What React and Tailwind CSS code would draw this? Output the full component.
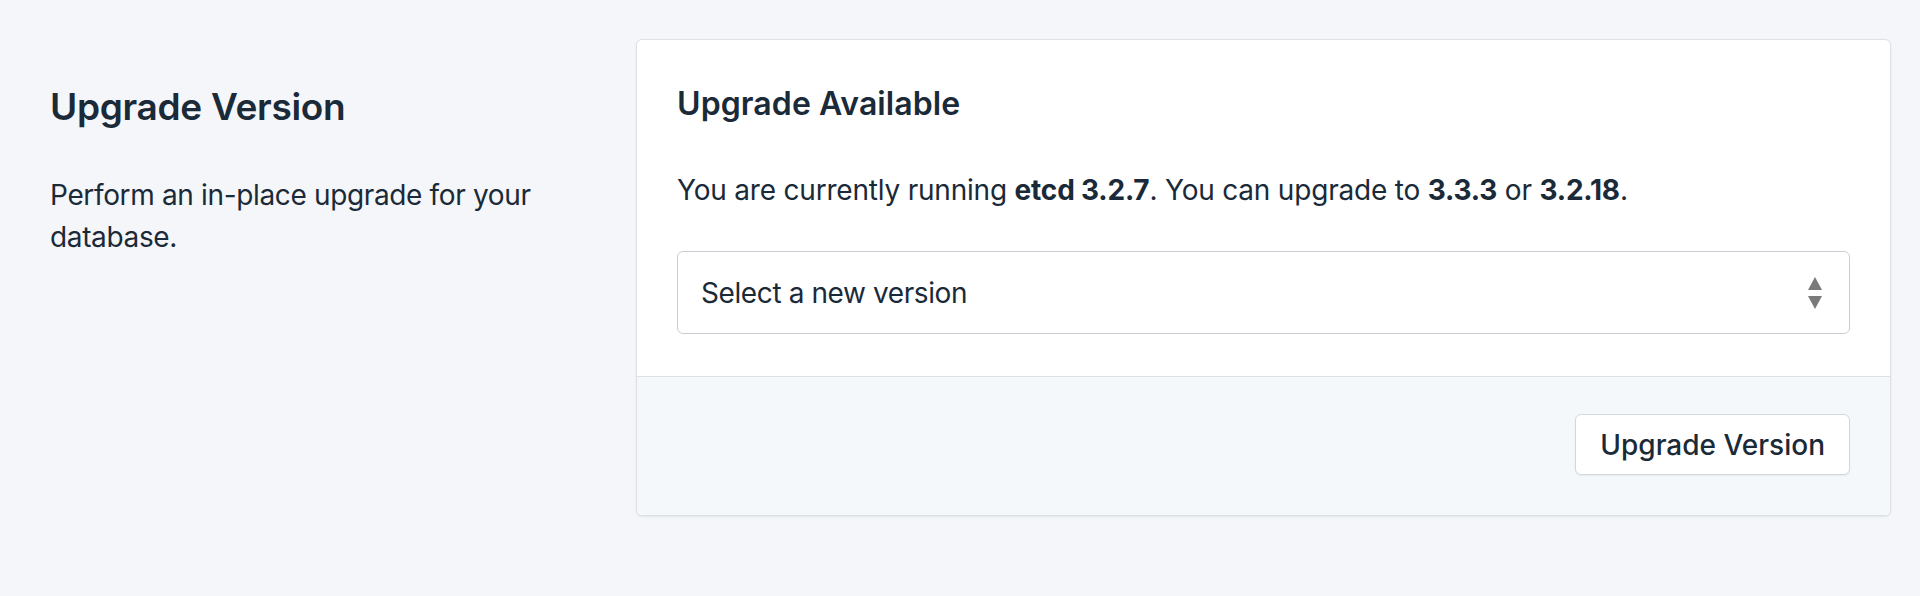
export default function App() {
  return (
    <div className="min-h-screen bg-[#f5f6f9] font-['Inter',sans-serif] text-[#1b2a38]">
      <div className="flex pl-[50px] pr-[29px] pt-[39px]">
        {/* --- LEFT: section description --- */}
        <div className="w-[586px] shrink-0 pt-[46px]">
          <h2 className="text-[37px] leading-[44px] font-semibold tracking-[-0.3px]">Upgrade Version</h2>
          <p className="mt-[45px] max-w-[500px] text-[28px] leading-[42px] tracking-[-0.35px]">
            Perform an in-place upgrade for your database.
          </p>
        </div>

        {/* --- RIGHT: card --- */}
        <div className="flex-1 overflow-hidden rounded-[6px] border border-[#dde1e6] bg-white shadow-[0_1px_2px_rgba(0,0,0,0.08)]">
          <div className="px-[40px] pt-[41px] pb-[42px]">
            <h3 className="text-[32px] leading-[46px] font-semibold tracking-[0.1px]">Upgrade Available</h3>
            <p className="mt-[42px] text-[28px] leading-[42px] tracking-[-0.2px]">
              You are currently running <strong className="font-bold">etcd 3.2.7</strong>. You can upgrade to{" "}
              <strong className="font-bold">3.3.3</strong> or <strong className="font-bold">3.2.18</strong>.
            </p>
            <div className="mt-[40px] flex h-[83px] items-center justify-between rounded-[6px] border border-[#c9ced4] pl-[23px] pr-[27px]">
              <span className="text-[28px] tracking-[-0.4px]">Select a new version</span>
              <svg width="14" height="32" viewBox="0 0 14 32" className="fill-[#7a7a7a]">
                <path d="M7 0 L14 13 L0 13 Z" />
                <path d="M0 19 L14 19 L7 32 Z" />
              </svg>
            </div>
          </div>
          <div className="flex justify-end border-t border-[#dde1e6] bg-[#f5f8fa] px-[40px] pt-[37px] pb-[40px]">
            <button
              type="button"
              className="h-[61px] rounded-[6px] border border-[#d3d8dd] bg-white px-[24px] text-[28px] font-medium shadow-[0_1px_2px_rgba(0,0,0,0.06)]"
            >
              Upgrade Version
            </button>
          </div>
        </div>
      </div>
    </div>
  );
}
